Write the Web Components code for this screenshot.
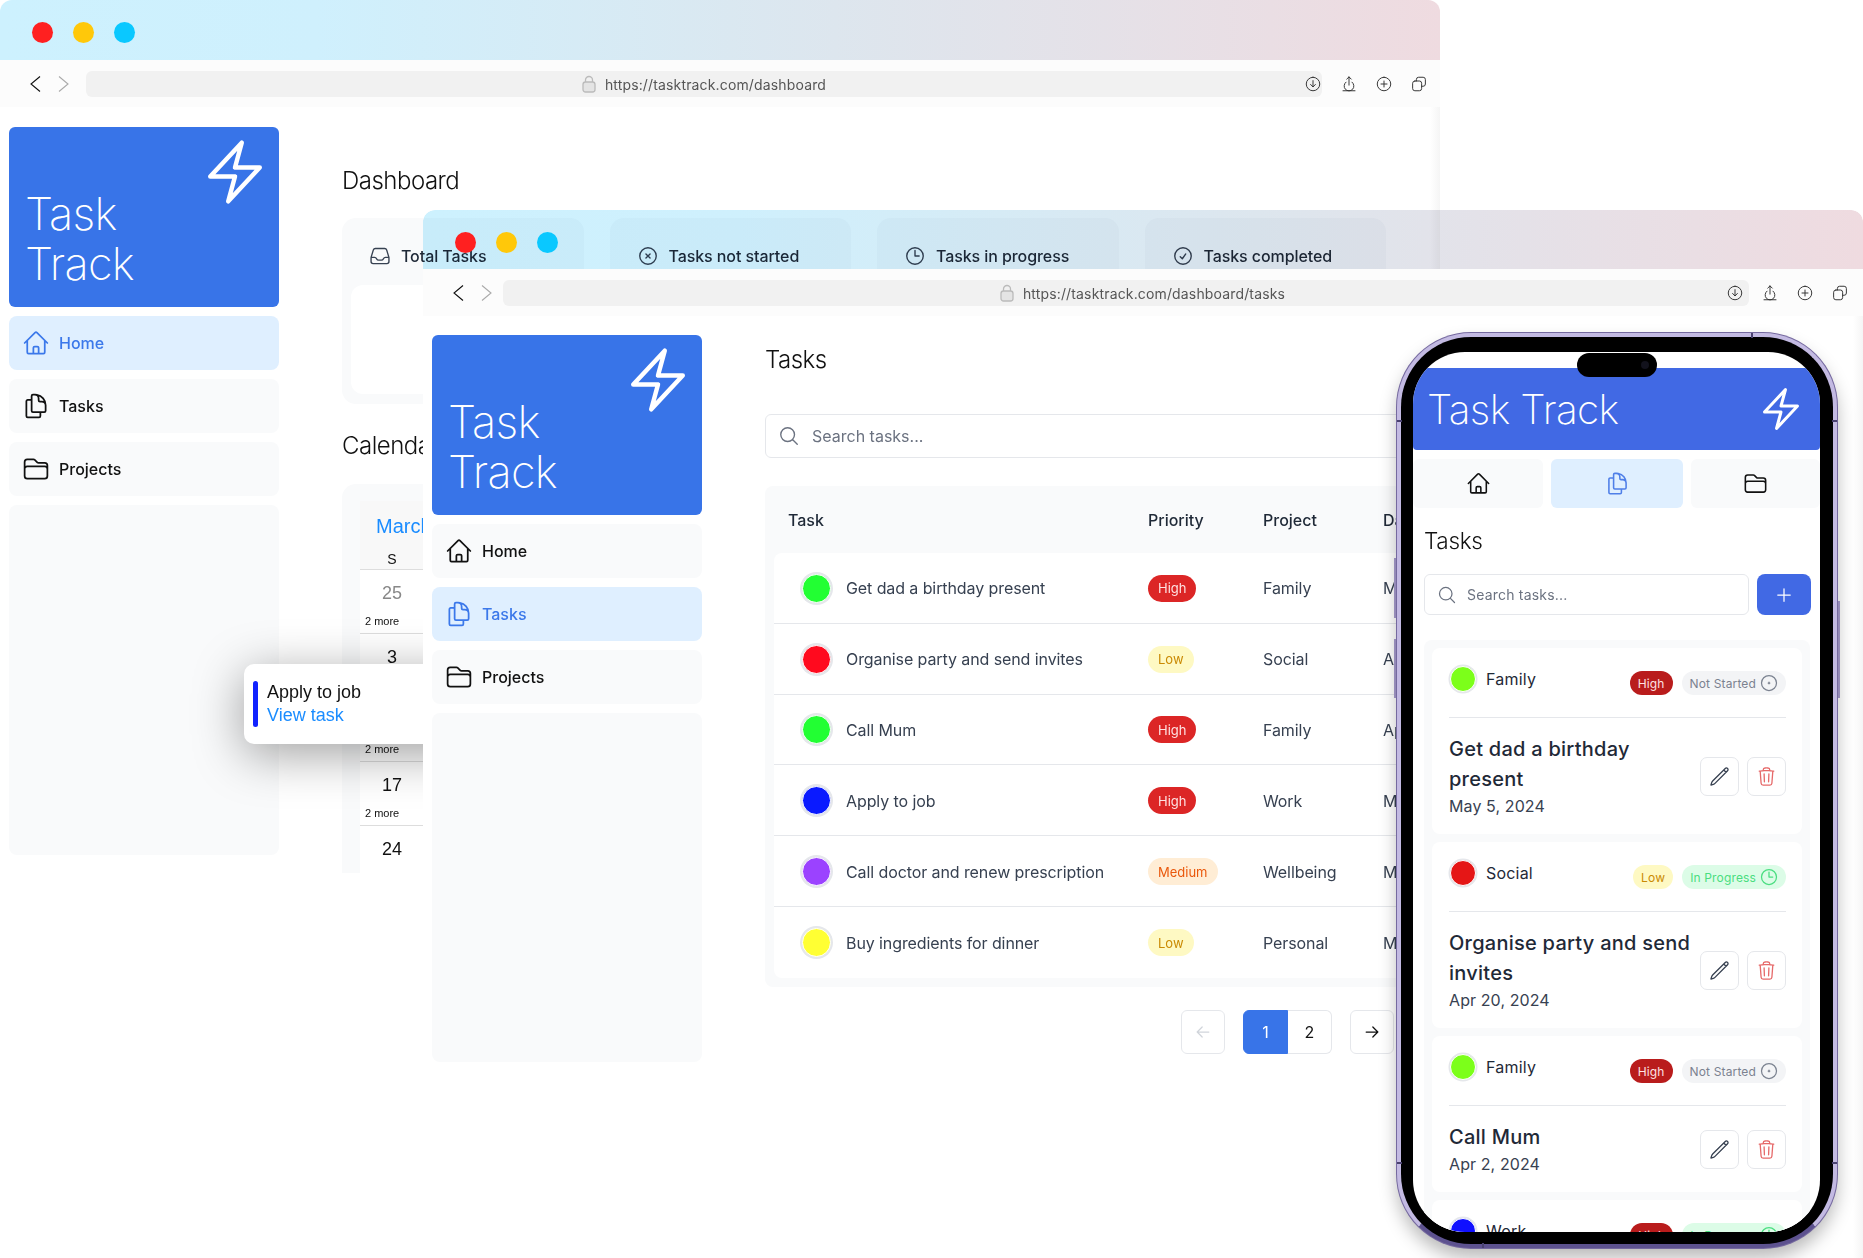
<!DOCTYPE html>
<html lang="en">
<head>
<meta charset="utf-8">
<title>Task Track</title>
<style>
  html, body { margin: 0; padding: 0; background: #fff; }
  body { font-family: Inter, "Liberation Sans", sans-serif; color: #111; }
  .back-main { display: block; margin: 60px 0 0 63px; width: 1060px; }
  .front-main { display: block; margin: 30px 0 0 63px; width: 629px; }
</style>
</head>
<body>
<mock-desktop>
  <browser-window url="https://tasktrack.com/dashboard" style="left:0;top:0;width:1440px;height:873px;--bar:60px;--chev-gap:17px;--acts-gap:18px;--tool-right:12px;--dl-pad:0px;--url-shift:0px;">
    <app-sidebar active="home" pad="20" fill="350"></app-sidebar>
    <div class="back-main">
      <page-title>Dashboard</page-title>
      <stat-row>
        <stat-card icon="inbox">Total Tasks</stat-card>
        <stat-card icon="xcircle">Tasks not started</stat-card>
        <stat-card icon="clock">Tasks in progress</stat-card>
        <stat-card icon="check">Tasks completed</stat-card>
      </stat-row>
      <page-title style="margin-top:28px">Calendar</page-title>
      <month-calendar></month-calendar>
    </div>
    <event-popup></event-popup>
  </browser-window>

  <browser-window url="https://tasktrack.com/dashboard/tasks" style="left:423px;top:210px;width:1440px;height:1048px;--bar:59px;--chev-gap:11px;--acts-gap:12px;--tool-right:14px;--dl-pad:5px;--url-shift:33px;">
    <app-sidebar active="tasks" pad="19" fill="349"></app-sidebar>
    <div class="front-main">
      <page-title>Tasks</page-title>
      <search-field style="margin:40px -20px 0 0"></search-field>
      <task-table style="margin:28px -8px 0 0">
        <task-row color="#22ff33" name="Get dad a birthday present" priority="High" project="Family" date="May 5, 2024"></task-row>
        <task-row color="#ff0a1e" name="Organise party and send invites" priority="Low" project="Social" date="Apr 20, 2024"></task-row>
        <task-row color="#22ff33" name="Call Mum" priority="High" project="Family" date="Apr 2, 2024"></task-row>
        <task-row color="#0a1aff" name="Apply to job" priority="High" project="Work" date="May 1, 2024"></task-row>
        <task-row color="#9b42ff" name="Call doctor and renew prescription" priority="Medium" project="Wellbeing" date="May 12, 2024"></task-row>
        <task-row color="#ffff33" name="Buy ingredients for dinner" priority="Low" project="Personal" date="May 3, 2024"></task-row>
      </task-table>
      <pager-nav></pager-nav>
    </div>
  </browser-window>

  <phone-frame>
    <phone-header></phone-header>
    <phone-tabs></phone-tabs>
    <phone-search></phone-search>
    <card-list>
      <task-card color="#7cff1a" project="Family" priority="High" status="Not Started" title="Get dad a birthday present" date="May 5, 2024"></task-card>
      <task-card color="#e51616" project="Social" priority="Low" status="In Progress" title="Organise party and send invites" date="Apr 20, 2024"></task-card>
      <task-card color="#7cff1a" project="Family" priority="High" status="Not Started" title="Call Mum" date="Apr 2, 2024"></task-card>
      <task-card color="#1010ff" project="Work" priority="High" status="In Progress" title="Apply to job" date="May 1, 2024"></task-card>
    </card-list>
  </phone-frame>
</mock-desktop>

<script>
const PATHS = {
  bolt: 'M3.75 13.5l10.5-11.25L12 10.5h8.25L9.75 21.75 12 13.5H3.75z',
  home: 'M2.25 12l8.954-8.955c.44-.439 1.152-.439 1.591 0L21.75 12M4.5 9.75v10.125c0 .621.504 1.125 1.125 1.125H9.75v-4.875c0-.621.504-1.125 1.125-1.125h2.25c.621 0 1.125.504 1.125 1.125V21h4.125c.621 0 1.125-.504 1.125-1.125V9.75M8.25 21h8.25',
  tasks: 'M15.75 17.25v3.375c0 .621-.504 1.125-1.125 1.125h-9.75a1.125 1.125 0 01-1.125-1.125V7.875c0-.621.504-1.125 1.125-1.125H6.75a9.06 9.06 0 011.5.124m7.5 10.376h3.375c.621 0 1.125-.504 1.125-1.125V11.25c0-4.46-3.243-8.161-7.5-8.876a9.06 9.06 0 00-1.5-.124H9.375c-.621 0-1.125.504-1.125 1.125v3.5m7.5 10.375H9.375a1.125 1.125 0 01-1.125-1.125v-9.25m12 6.625v-1.875a3.375 3.375 0 00-3.375-3.375h-1.5a1.125 1.125 0 01-1.125-1.125v-1.5a3.375 3.375 0 00-3.375-3.375H9.75',
  projects: 'M2.25 12.75V12A2.25 2.25 0 014.5 9.75h15A2.25 2.25 0 0121.75 12v.75m-8.69-6.44l-2.12-2.12a1.5 1.5 0 00-1.061-.44H4.5A2.25 2.25 0 002.25 6v12a2.25 2.25 0 002.25 2.25h15A2.25 2.25 0 0021.75 18V9a2.25 2.25 0 00-2.25-2.25h-5.379a1.5 1.5 0 01-1.06-.44z',
  inbox: 'M2.25 13.5h3.86a2.25 2.25 0 012.012 1.244l.256.512a2.25 2.25 0 002.013 1.244h3.218a2.25 2.25 0 002.013-1.244l.256-.512a2.25 2.25 0 012.013-1.244h3.859m-19.5.338V18a2.25 2.25 0 002.25 2.25h15A2.25 2.25 0 0021.75 18v-4.162c0-.224-.034-.447-.1-.661L19.24 5.338A2.25 2.25 0 0017.088 3.75H6.912a2.25 2.25 0 00-2.15 1.588L2.35 13.177a2.25 2.25 0 00-.1.661z',
  xcircle: 'M9.750 9.750l4.500 4.500m0-4.500l-4.500 4.500M21 12a9 9 0 11-18 0 9 9 0 0118 0z',
  dotcircle: 'M21 12a9 9 0 11-18 0 9 9 0 0118 0zM12 11v2M11 12h2',
  clock: 'M12 6v6h4.500m4.500 0a9 9 0 11-18 0 9 9 0 0118 0z',
  check: 'M9 12.750L11.250 15 15 9.750M21 12a9 9 0 11-18 0 9 9 0 0118 0z',
  search: 'M21 21l-5.197-5.197m0 0A7.500 7.500 0 105.196 5.196a7.500 7.500 0 0010.607 10.607z',
  pencil: 'M16.862 4.487l1.687-1.688a1.875 1.875 0 112.652 2.652L6.832 19.82a4.500 4.500 0 01-1.897 1.13l-2.685.8.8-2.685a4.500 4.500 0 011.13-1.897L16.863 4.487zm0 0L19.500 7.125',
  trash: 'M14.74 9l-.346 9m-4.788 0L9.26 9m9.968-3.21c.342.052.682.107 1.022.166m-1.022-.165L18.16 19.673a2.25 2.25 0 01-2.244 2.077H8.084a2.25 2.25 0 01-2.244-2.077L4.772 5.79m14.456 0a48.108 48.108 0 00-3.478-.397m-12 .562c.34-.059.68-.114 1.022-.165m0 0a48.11 48.11 0 013.478-.397m7.500 0v-.916c0-1.18-.91-2.164-2.09-2.201a51.964 51.964 0 00-3.32 0c-1.18.037-2.09 1.022-2.09 2.201v.916m7.500 0a48.667 48.667 0 00-7.500 0',
  left: 'M19 12H5m0 0l6 6m-6-6l6-6',
  right: 'M5 12h14m0 0l-6-6m6 6l-6 6',
  plus: 'M12 4.500v15m7.500-7.500h-15',
  dl: 'M12 3a9 9 0 110 18 9 9 0 010-18zM12 7.500v8M8.800 12.600L12 16l3.200-3.400',
  share: 'M8 9.500a6.500 6.500 0 108 0M12 2.500v11M9 5.500l3-3 3 3M4 21h16',
  plusc: 'M12 3a9 9 0 110 18 9 9 0 010-18zM12 8v8M8 12h8',
  copy: 'M8.500 8V6a3 3 0 013-3h6a3 3 0 013 3v6a3 3 0 01-3 3h-2M6.500 8h6a3 3 0 013 3v7a3 3 0 01-3 3h-6a3 3 0 01-3-3v-7a3 3 0 013-3z'
};
function icon(name, size, sw) {
  return `<svg width="${size}" height="${size}" viewBox="0 0 24 24" fill="none" stroke="currentColor" stroke-width="${sw || 1.5}" stroke-linecap="round" stroke-linejoin="round" style="display:block;flex:none"><path d="${PATHS[name]}"/></svg>`;
}
function def(tag, css, html, init) {
  customElements.define(tag, class extends HTMLElement {
    connectedCallback() {
      if (this.shadowRoot) return;
      const root = this.attachShadow({ mode: 'open' });
      const a = n => this.getAttribute(n);
      root.innerHTML = `<style>${css}</style>` + (typeof html === 'function' ? html(a, this) : html);
      if (init) init(root, a, this);
    }
  });
}

def('mock-desktop', `:host{display:block;position:relative;width:1863px;height:1258px;overflow:hidden;background:#fff}`, `<slot></slot>`);

def('browser-window', `
  :host{display:block;position:absolute}
  .win{height:100%;display:flex;flex-direction:column;border-radius:12px 12px 0 0;overflow:hidden}
  .bar{position:relative;height:var(--bar);flex:none;display:flex;gap:20px;padding:22px 0 0 32px;box-sizing:border-box}
  .bar::before{content:"";position:absolute;inset:0;background:linear-gradient(90deg,#cdf1fe 0%,#cff0fd 22%,#dde6ee 58%,#efdbe0 100%);mix-blend-mode:multiply}
  .light{position:relative;width:21px;height:21px;border-radius:50%}
  .tool{height:47px;flex:none;background:#fcfcfc;display:flex;align-items:flex-start;padding:11px var(--tool-right) 0 30px;box-sizing:border-box}
  .chev{display:flex;gap:17px;margin:5px var(--chev-gap) 0 0}
  .addr{flex:1;height:26px;background:#f1f1f1;border-radius:6px;display:grid;grid-template-columns:1fr auto 1fr;align-items:center;font-size:14px;color:#555;letter-spacing:.15px}
  .url{display:flex;align-items:center;gap:9px;margin-left:var(--url-shift)}
  .dl{justify-self:end;padding-right:var(--dl-pad);color:#333}
  .acts{display:flex;gap:17px;margin:4px 0 0 var(--acts-gap);color:#333}
  .lock{color:#bbb}
  .body{position:relative;flex:1;min-height:0;background:#fff;display:flex;align-items:flex-start;overflow:hidden}
  .shade{position:absolute;top:0;bottom:0;right:0;width:10px;background:linear-gradient(90deg,rgba(240,240,240,0),#f5f5f5)}
`, a => `
  <div class="win">
    <div class="bar"><span class="light" style="background:#ff2020"></span><span class="light" style="background:#ffc80a"></span><span class="light" style="background:#0ac8ff"></span></div>
    <div class="tool">
      <div class="chev">
        <svg width="11" height="16" viewBox="0 0 11 16" fill="none" stroke="#111" stroke-width="1.1"><path d="M10 .5L1 8l9 7.500"/></svg>
        <svg width="11" height="16" viewBox="0 0 11 16" fill="none" stroke="#aaa" stroke-width="1.1"><path d="M1 .5L10 8l-9 7.500"/></svg>
      </div>
      <div class="addr"><span></span>
        <span class="url"><svg class="lock" width="14" height="18" viewBox="0 0 14 18" fill="none" stroke="currentColor" stroke-width="1.300"><path d="M3.500 7V5a3.500 3.500 0 017 0v2"/><rect x="1" y="7" width="12" height="10" rx="2.500" fill="#e4e4e4"/></svg>${a('url')}</span>
        <span class="dl">${icon('dl', 18, 1.3)}</span>
      </div>
      <div class="acts">${icon('share', 18, 1.3)}${icon('plusc', 18, 1.3)}${icon('copy', 18, 1.3)}</div>
    </div>
    <div class="body"><slot></slot><span class="shade"></span></div>
  </div>`);

def('app-sidebar', `
  :host{display:flex;flex:none;flex-direction:column;gap:9px;width:270px;margin-left:9px}
  .brand{height:180px;background:#3874e8;border-radius:6px;color:#fff;display:flex;justify-content:space-between;padding:0 8px 18px 16px;box-sizing:border-box}
  .name{align-self:flex-end;font-size:45px;line-height:50px;font-weight:250;letter-spacing:-.75px}
  .bolt{margin-top:9px}
  .fill{background:#f9fafb;border-radius:8px}
`, a => `
  <div style="height:${a('pad')}px;margin-bottom:-9px"></div>
  <div class="brand"><div class="name">Task<br>Track</div><div class="bolt">${icon('bolt', 72)}</div></div>
  <nav-item icon="home"${a('active') === 'home' ? ' active' : ''}>Home</nav-item>
  <nav-item icon="tasks"${a('active') === 'tasks' ? ' active' : ''}>Tasks</nav-item>
  <nav-item icon="projects"${a('active') === 'projects' ? ' active' : ''}>Projects</nav-item>
  <div class="fill" style="height:${a('fill')}px"></div>`);

def('nav-item', `
  :host{display:flex;align-items:center;gap:9px;height:54px;padding-left:13px;background:#f9fafb;border-radius:8px;color:#111;font-size:16px;font-weight:500}
  :host([active]){background:#dfefff;color:#3b78ea}
`, a => `${icon(a('icon'), 28)}<slot></slot>`);

def('page-title', `:host{display:block;font-size:24px;line-height:28px;font-weight:300;color:#111;letter-spacing:-.5px;white-space:nowrap}`, `<slot></slot>`);

def('stat-row', `:host{display:flex;gap:26px;margin-top:23px}`, `<slot></slot>`);

def('stat-card', `
  :host{display:block;flex:none;width:241.500px;height:186px;background:#f9fafb;border-radius:14px;padding:9px;box-sizing:border-box}
  .head{display:flex;align-items:center;gap:10px;height:57px;padding:0 0 1px 18px;font-size:16px;font-weight:500;color:#1f2937;letter-spacing:-.08px}
  .head svg{color:#374151}
  .box{height:109px;background:#fff;border-radius:12px}
`, a => `<div class="head">${icon(a('icon'), 22)}<slot></slot></div><div class="box"></div>`);

def('month-calendar', `
  :host{display:block;margin-top:24px;height:390px;background:#f9fafb;border-radius:14px 14px 0 0;padding:17px 0 0 18px;box-sizing:border-box;overflow:hidden;font-family:"Liberation Sans",sans-serif}
  .cal{background:#fff;width:448px;height:373px;overflow:hidden}
  .top{background:#f8f8f8;height:69px;box-sizing:border-box;border-bottom:1px solid #ddd;padding:13px 0 0 16px}
  .month{font-size:20px;line-height:24px;color:#1a8cff;white-space:nowrap}
  .dows{display:grid;grid-template-columns:repeat(7,64px);margin:14px 0 0 -16px;font-size:14px;line-height:15px;text-align:center;color:#111}
  .row{display:grid;grid-template-columns:repeat(7,64px);height:64px;box-sizing:border-box;border-bottom:1px solid #ddd}
  .c{padding-top:13px;text-align:center;font-size:18px;line-height:21px;color:#111}
  .c.g{color:#888}
  .m{display:block;margin-top:11px;padding-left:5px;text-align:left;font-size:11px;line-height:13px;color:#111}
`, () => {
  const rows = [[25,26,27,28,29,1,2],[3,4,5,6,7,8,9],[10,11,12,13,14,15,16],[17,18,19,20,21,22,23],[24,25,26,27,28,29,30]];
  const more = [1,1,1,1,0];
  return `<div class="cal"><div class="top"><div class="month">March 2024</div><div class="dows">${['S','M','T','W','T','F','S'].map(d=>`<span>${d}</span>`).join('')}</div></div>` +
    rows.map((r,i)=>`<div class="row">${r.map((n,j)=>`<div class="c${i===0&&n>20?' g':''}">${n}${more[i]&&j===0?'<span class="m">2 more</span>':''}</div>`).join('')}</div>`).join('') + `</div>`;
});

def('event-popup', `
  :host{position:absolute;left:244px;top:556px;width:300px;height:80px;box-sizing:border-box;background:#fff;border-radius:10px;box-shadow:0 10px 50px rgba(0,0,0,.38);display:flex;gap:9px;padding:17px 0 0 9px;font-family:"Liberation Sans",sans-serif;font-size:18px;line-height:23px;margin-top:1px}
  .tick{width:5px;height:46px;border-radius:3px;background:#1122ff}
  .link{color:#1a8cff}
`, `<div class="tick"></div><div><div>Apply to job</div><div class="link">View task</div></div>`);

def('search-field', `
  :host{display:flex;align-items:center;gap:12px;height:44px;box-sizing:border-box;border:1px solid #e5e7eb;border-radius:6px;padding-left:12px;font-size:16px;color:#6b7280;background:#fff}
`, `${icon('search', 22)}<span>Search tasks...</span>`);

def('task-table', `
  :host{display:block;background:#f9fafb;border-radius:8px;overflow:hidden;padding:0 0 9px 9px}
  .head{display:grid;grid-template-columns:374px 115px 120px 1fr;height:67px;align-items:center;font-size:16px;font-weight:500;color:#1f2937;white-space:nowrap}
  .list{background:#fff;border-radius:8px 0 0 8px;width:640px}
`, `<div class="head"><span style="padding-left:14px">Task</span><span>Priority</span><span>Project</span><span>Date</span></div><div class="list"><slot></slot></div>`);

def('pill-tag', `
  :host{display:inline-flex;align-items:center;gap:3px;height:27px;padding:0 10px;border-radius:14px;font-size:13px;white-space:nowrap;box-sizing:border-box}
  :host([size=s]){height:24px;padding:0 8px;font-size:12px;letter-spacing:.15px}
  :host([status-icon]){padding-right:7px}
  :host([kind=High]){background:#dc2626;color:#fee2e2}
  :host([kind=High][size=s]){background:#b91c1c}
  :host([kind=Low]){background:#fef9c3;color:#ca8a04}
  :host([kind=Medium]){background:#ffedd5;color:#ea580c}
  :host([kind="Not Started"]){background:#f3f4f6;color:#7b8290}
  :host([kind="In Progress"]){background:#dcfce7;color:#4ade80}
`, (a) => `<slot></slot>${a('status-icon') ? icon(a('status-icon'), 20) : ''}`);

def('task-row', `
  :host{display:grid;grid-template-columns:374px 115px 120px 1fr;height:70.800px;padding-top:1px;align-items:center;box-sizing:border-box;border-bottom:1px solid #e5e7eb;font-size:16px;color:#374151;white-space:nowrap;letter-spacing:-.09px}
  :host(:last-child){border-bottom:0}
  .t{display:flex;align-items:center;gap:15px;padding-left:28px}
  .d{width:27px;height:27px;border-radius:50%;border:1px solid #fff;box-shadow:0 0 0 2px #e5e7eb}
  .p{justify-self:start;display:flex;letter-spacing:0}
`, a => `<div class="t"><span class="d" style="background:${a('color')}"></span><span>${a('name')}</span></div><div class="p"><pill-tag kind="${a('priority')}">${a('priority')}</pill-tag></div><div>${a('project')}</div><div>${a('date')}</div>`);

def('pager-nav', `
  :host{display:flex;justify-content:flex-end;gap:18px;margin-top:23px;color:#111;font-size:16px}
  .b{width:44px;height:44px;box-sizing:border-box;border:1px solid #e5e7eb;border-radius:6px;background:#fff;display:flex;align-items:center;justify-content:center}
  .g{display:flex}
  .g .b:first-child{background:#3874e8;border-color:#3874e8;color:#fff;border-radius:6px 0 0 6px;width:45px}
  .g .b:last-child{border-left:0;border-radius:0 6px 6px 0;width:44px}
`, `<div class="b" style="color:#d1d5db">${icon('left', 20)}</div><div class="g"><div class="b">1</div><div class="b">2</div></div><div class="b">${icon('right', 20)}</div>`);

def('phone-frame', `
  :host{position:absolute;left:1397px;top:333px;width:440px;height:915px;display:block}
  .btn{position:absolute;background:#a89dcf}
  .frame{position:relative;width:100%;height:100%;box-sizing:border-box;border-radius:74px;background:#000;border:4px solid #c3bae2;border-bottom-color:#5d528f;box-shadow:0 0 0 1px #75699f,0 10px 18px rgba(0,0,0,.28);padding:15px 13px 12px 12px}
  .screen{position:relative;height:100%;background:#fff;border-radius:52px;overflow:hidden;display:flex;flex-direction:column;padding-top:16px;box-sizing:border-box}
  .island{position:absolute;left:164px;top:1px;width:80px;height:24px;border-radius:12px;background:#000}
  .cam{position:absolute;right:8px;top:8px;width:8px;height:8px;border-radius:50%;background:#12121c}
  .mark{position:absolute;background:#4a4270}
`, `
  <span class="btn" style="left:-3px;top:225px;width:3px;height:60px"></span>
  <span class="btn" style="left:-3px;top:306px;width:3px;height:59px"></span>
  <span class="btn" style="right:-3px;top:268px;width:3px;height:97px"></span>
  <div class="frame">
    <div class="screen"><slot></slot><div class="island"><span class="cam"></span></div></div>
  </div>
  <span class="mark" style="left:354px;top:0;width:2px;height:5px"></span>
  <span class="mark" style="left:0;top:87px;width:5px;height:2px"></span>
  <span class="mark" style="right:0;top:87px;width:5px;height:2px"></span>
  <span class="mark" style="left:0;top:829px;width:5px;height:2px"></span>
  <span class="mark" style="right:0;top:829px;width:5px;height:2px"></span>
  <span class="mark" style="left:85px;bottom:0;width:2px;height:5px"></span>`);

def('phone-header', `
  :host{display:flex;flex:none;align-items:center;justify-content:space-between;height:82px;background:#4169e4;border-radius:0 0 4px 4px;color:#fff;padding:0 15px 0 14px;box-sizing:border-box}
  .n{font-size:40.500px;font-weight:250;letter-spacing:-.65px;white-space:nowrap}
`, `<span class="n">Task Track</span>${icon('bolt', 48)}`);

def('phone-tabs', `
  :host{display:grid;flex:none;grid-template-columns:130px 132px 1fr;gap:8px;height:49px;margin-top:9px;color:#111}
  .t{display:flex;align-items:center;justify-content:center;background:#f9fafb;border-radius:6px}
  .a{background:#dfefff;color:#4f7fe8}
`, `<div class="t">${icon('home', 25)}</div><div class="t a">${icon('tasks', 25)}</div><div class="t">${icon('projects', 25)}</div>`);

def('phone-search', `
  :host{display:block;flex:none;padding:19px 9px 0 11px}
  .h{font-size:22.500px;line-height:28px;font-weight:300;color:#111;letter-spacing:-.3px}
  .r{display:flex;gap:8px;margin-top:19px}
  .s{flex:1;height:41px;box-sizing:border-box;border:1px solid #e5e7eb;border-radius:6px;display:flex;align-items:center;gap:10px;padding-left:12px;font-size:14px;color:#6b7280;letter-spacing:.2px}
  .p{width:54px;height:41px;border-radius:8px;background:#4169e4;color:#fff;display:flex;align-items:center;justify-content:center}
  .s svg{color:#6b7280}
`, `<div class="h">Tasks</div><div class="r"><div class="s">${icon('search', 20)}<span>Search tasks...</span></div><div class="p">${icon('plus', 20)}</div></div>`);

def('card-list', `
  :host{display:flex;flex-direction:column;gap:8px;flex:none;margin:25px 10px 0 11px;padding:8px;background:#f9fafb;border-radius:8px}
`, `<slot></slot>`);

def('task-card', `
  :host{display:block;background:#fff;border-radius:8px;padding:0 16px 0 17px}
  .top{height:70px;box-sizing:border-box;padding-top:18px;border-bottom:1px solid #e5e7eb;display:flex;align-items:flex-start}
  .d{width:24px;height:24px;border-radius:50%;border:1px solid #fff;box-shadow:0 0 0 1.500px #e5e7eb;margin:0 10px 0 1px}
  .f{flex:1;font-size:16px;line-height:26px;color:#1f2937;letter-spacing:.2px}
  .ps{display:flex;gap:9px;margin-top:5px}
  .body{display:flex;align-items:center;padding:16px 0}
  .tx{flex:1;min-width:0;padding-right:4px}
  .ti{font-size:20px;line-height:30px;font-weight:500;color:#1f2937;letter-spacing:.25px}
  .da{font-size:16px;line-height:24px;color:#374151;letter-spacing:.1px}
  .bt{flex:none;display:flex;gap:8px}
  .b{width:39px;height:39px;box-sizing:border-box;border:1px solid #e5e7eb;border-radius:7px;display:flex;align-items:center;justify-content:center;color:#374151}
  .b.r{color:#e66a6a}
`, a => `
  <div class="top"><span class="d" style="background:${a('color')}"></span><span class="f">${a('project')}</span>
    <div class="ps"><pill-tag size="s" kind="${a('priority')}">${a('priority')}</pill-tag><pill-tag size="s" kind="${a('status')}" status-icon="${a('status') === 'Not Started' ? 'dotcircle' : 'clock'}">${a('status')}</pill-tag></div></div>
  <div class="body"><div class="tx"><div class="ti">${a('title')}</div><div class="da">${a('date')}</div></div>
    <div class="bt"><div class="b">${icon('pencil', 21)}</div><div class="b r">${icon('trash', 21)}</div></div></div>`);
</script>
</body>
</html>
